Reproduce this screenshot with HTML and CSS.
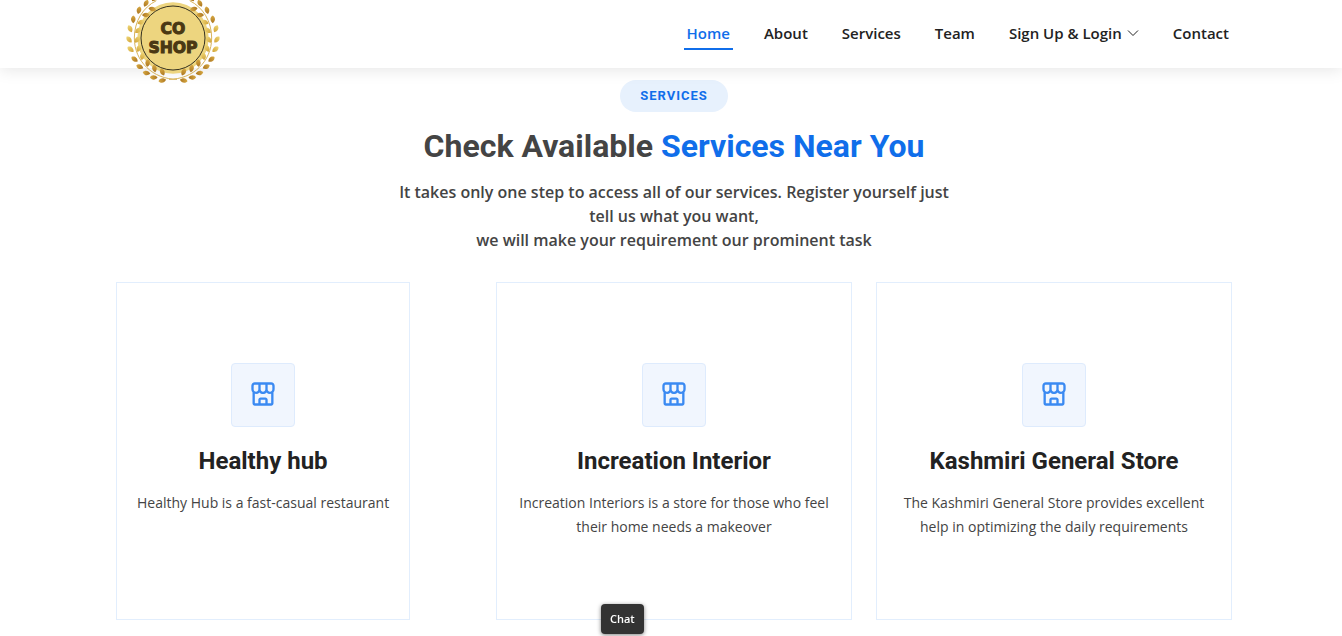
FILE: index.html
```
<!DOCTYPE html>
<html lang="en">
  <head>
    <meta charset="UTF-8" />
    <meta name="viewport" content="width=device-width, initial-scale=1.0" />
    <title>Co Shop</title>
    <link rel="stylesheet" href="styles.css">
  </head>
  <body>
    <!-- Shared shapes -->
    <svg class="sprite" width="0" height="0" aria-hidden="true">
      <defs>
        <linearGradient id="gold" gradientUnits="userSpaceOnUse" x1="-13" y1="0" x2="13" y2="0">
          <stop offset="0" stop-color="#d9ab45" />
          <stop offset="1" stop-color="#a8711c" />
        </linearGradient>
        <linearGradient id="goldLight" gradientUnits="userSpaceOnUse" x1="-13" y1="0" x2="13" y2="0">
          <stop offset="0" stop-color="#f0d878" />
          <stop offset="1" stop-color="#cfa033" />
        </linearGradient>
        <path id="leafShape" d="M-12 1C-8 -8 4 -9 11 0C5 9 -6 10 -12 1Z" />
        <g id="out"><use href="#leafShape" fill="url(#gold)" transform="translate(0 131) rotate(-22)" /></g>
        <g id="outLight"><use href="#leafShape" fill="url(#goldLight)" transform="translate(0 131) rotate(-35)" /></g>
        <g id="in"><use href="#leafShape" fill="url(#gold)" transform="translate(0 107) rotate(50)" /></g>
        <g id="inLight"><use href="#leafShape" fill="url(#goldLight)" transform="translate(0 107) rotate(42)" /></g>
        <g id="branch">
          <path d="M12 124C-60 124 -116 70 -116 0C-116 -50 -90 -92 -50 -112" fill="none" stroke="#d8b35a" stroke-width="3" />
          <use href="#out" transform="rotate(14)" />
          <use href="#out" transform="rotate(26)" />
          <use href="#out" transform="rotate(37)" />
          <use href="#out" transform="rotate(49)" />
          <use href="#out" transform="rotate(61)" />
          <use href="#outLight" transform="rotate(75)" />
          <use href="#outLight" transform="rotate(88)" />
          <use href="#outLight" transform="rotate(102)" />
          <use href="#out" transform="rotate(115)" />
          <use href="#out" transform="rotate(129)" />
          <use href="#out" transform="rotate(142)" />
          <use href="#out" transform="rotate(155)" />
          <use href="#in" transform="rotate(17)" />
          <use href="#in" transform="rotate(31)" />
          <use href="#in" transform="rotate(45)" />
          <use href="#inLight" transform="rotate(59)" />
          <use href="#inLight" transform="rotate(73)" />
          <use href="#inLight" transform="rotate(87)" />
          <use href="#inLight" transform="rotate(102)" />
          <use href="#inLight" transform="rotate(116)" />
          <use href="#in" transform="rotate(130)" />
          <use href="#in" transform="rotate(144)" />
        </g>
      </defs>
      <symbol id="store" viewBox="0 0 24 24">
        <path d="M22 5c0-1.654-1.346-3-3-3H5C3.346 2 2 3.346 2 5v2.831c0 1.053.382 2.01 1 2.746V20c0 1.103.897 2 2 2h14c1.103 0 2-.897 2-2v-9.424c.618-.735 1-1.692 1-2.746V5zm-2 0v2.831c0 1.14-.849 2.112-1.891 2.167L18 10c-1.103 0-2-.897-2-2V4h3c.552 0 1 .449 1 1zM10 4h4v4c0 1.103-.897 2-2 2s-2-.897-2-2V4zM4 5c0-.551.449-1 1-1h3v4c0 1.103-.897 2-2 2l-.109-.003C4.849 9.943 4 8.971 4 7.831V5zm6 15v-3h4v3h-4zm6 0v-3c0-1.103-.897-2-2-2h-4c-1.103 0-2 .897-2 2v3H5v-8.131c.321.083.652.14.999.131a3.97 3.97 0 0 0 3-1.357c.733.832 1.807 1.357 3.001 1.357s2.267-.525 3-1.357A3.97 3.97 0 0 0 18 12c.353.01.683-.048 1-.13V20h-3z" />
      </symbol>
    </svg>

    <header class="header">
      <div class="container header-inner">
        <a class="logo" href="#" aria-label="Co Shop">
          <svg class="logo-img" viewBox="-141 -141 282 282">
            <circle r="107" fill="#edd57f" />
            <use href="#branch" />
            <use href="#branch" transform="scale(-1 1)" />
            <circle r="96" fill="#edd57f" stroke="#34301f" stroke-width="3" />
            <text class="logo-text" x="0" y="-11">CO</text>
            <text class="logo-text" x="0" y="44">SHOP</text>
          </svg>
        </a>
        <nav class="navbar">
          <a class="nav-link active" href="#">Home</a>
          <a class="nav-link" href="#">About</a>
          <a class="nav-link" href="#">Services</a>
          <a class="nav-link" href="#">Team</a>
          <a class="nav-link" href="#">Sign Up &amp; Login
            <svg class="chevron" viewBox="0 0 12 12"><path d="M1 3.500L6 8.500L11 3.500" /></svg>
          </a>
          <a class="nav-link" href="#">Contact</a>
        </nav>
      </div>
    </header>

    <main class="services">
      <div class="container">
        <div class="section-title">
          <h2>Services</h2>
          <h3>Check Available <span>Services Near You</span></h3>
          <p>It takes only one step to access all of our services. Register yourself just tell us what you want,<br>we will make your requirement our prominent task</p>
        </div>

        <div class="cards">
          <div class="icon-box">
            <div class="icon"><svg><use href="#store" /></svg></div>
            <h4>Healthy hub</h4>
            <p>Healthy Hub is a fast-casual restaurant</p>
          </div>
          <div class="icon-box">
            <div class="icon"><svg><use href="#store" /></svg></div>
            <h4>Increation Interior</h4>
            <p>Increation Interiors is a store for those who feel their home needs a makeover</p>
          </div>
          <div class="icon-box">
            <div class="icon"><svg><use href="#store" /></svg></div>
            <h4>Kashmiri General Store</h4>
            <p>The Kashmiri General Store provides excellent help in optimizing the daily requirements</p>
          </div>
        </div>
      </div>
    </main>

    <button class="chat" type="button">Chat</button>
  </body>
</html>
```

FILE: styles.css
```
* {
  box-sizing: border-box;
}

body {
  font-family: "Open Sans", sans-serif;
  color: #444444;
  background: #ffffff;
  margin: 0;
}

a {
  text-decoration: none;
}

.sprite {
  position: absolute;
}

.container {
  max-width: 1146px;
  margin: 0 auto;
  padding: 0 12px 0 18px;
}

/* Header */
.header {
  position: relative;
  z-index: 10;
  height: 68px;
  background: #ffffff;
  box-shadow: 0 2px 15px rgba(0, 0, 0, 0.1);
}

.header-inner {
  display: flex;
  align-items: center;
  justify-content: space-between;
  height: 100%;
}

.logo {
  margin: 8px 0 0 10px;
}

.logo-img {
  display: block;
  width: 94px;
  height: 94px;
}

.logo-text {
  font-family: "DejaVu Sans", sans-serif;
  font-size: 47px;
  font-weight: 700;
  text-anchor: middle;
  fill: #4a3813;
  stroke: #4a3813;
  stroke-width: 3px;
}

.navbar {
  display: flex;
  gap: 28px;
}

.nav-link {
  display: flex;
  align-items: center;
  gap: 5px;
  padding: 4px 3px;
  border-bottom: 2px solid transparent;
  font-size: 15px;
  font-weight: 600;
  line-height: 22px;
  color: #222222;
  white-space: nowrap;
}

.nav-link.active {
  color: #106eea;
  border-color: #106eea;
}

.chevron {
  width: 12px;
  height: 12px;
  fill: none;
  stroke: #222222;
}

/* Services */
.services {
  padding: 12px 0 16px;
}

.section-title {
  text-align: center;
  padding-bottom: 30px;
}

.section-title h2 {
  display: inline-block;
  margin: 0;
  padding: 8px 20px;
  border-radius: 50px;
  background: #e7f1fd;
  color: #106eea;
  font-family: Roboto, sans-serif;
  font-size: 13px;
  font-weight: 700;
  line-height: 16px;
  letter-spacing: 1px;
  text-transform: uppercase;
  vertical-align: top;
}

.section-title h3 {
  margin: 15px 0 0;
  font-family: Roboto, sans-serif;
  font-size: 32px;
  font-weight: 700;
  line-height: 38px;
}

.section-title h3 span {
  color: #106eea;
}

.section-title p {
  width: 50%;
  margin: 15px auto 0;
  font-size: 16px;
  font-weight: 600;
  line-height: 24px;
}

.cards {
  display: grid;
  grid-template-columns: repeat(3, 1fr);
  gap: 24px;
}

.icon-box {
  width: fit-content;
  padding: 80px 20px;
  border: 1px solid #e2eefd;
  text-align: center;
}

.icon {
  display: flex;
  align-items: center;
  justify-content: center;
  width: 64px;
  height: 64px;
  margin: 0 auto;
  padding-bottom: 2px;
  border: 1px solid #deebfd;
  border-radius: 4px;
  background: #f1f6fe;
}

.icon svg {
  width: 28px;
  height: 28px;
  fill: #3b8af2;
}

.icon-box h4 {
  margin: 20px 0 16px;
  font-family: Roboto, sans-serif;
  font-size: 24px;
  font-weight: 700;
  line-height: 28px;
  color: #222222;
}

.icon-box p {
  margin: 0;
  font-size: 14px;
  line-height: 24px;
}

/* Chat launcher */
.chat {
  position: fixed;
  left: 601px;
  bottom: 2px;
  z-index: 20;
  padding: 7px 9px;
  border: none;
  border-radius: 4px;
  background: #333333;
  color: #ffffff;
  font-family: "Open Sans", sans-serif;
  font-size: 11px;
  font-weight: 600;
  line-height: 16px;
  box-shadow: 0 1px 4px rgba(0, 0, 0, 0.5);
  cursor: pointer;
}
```
